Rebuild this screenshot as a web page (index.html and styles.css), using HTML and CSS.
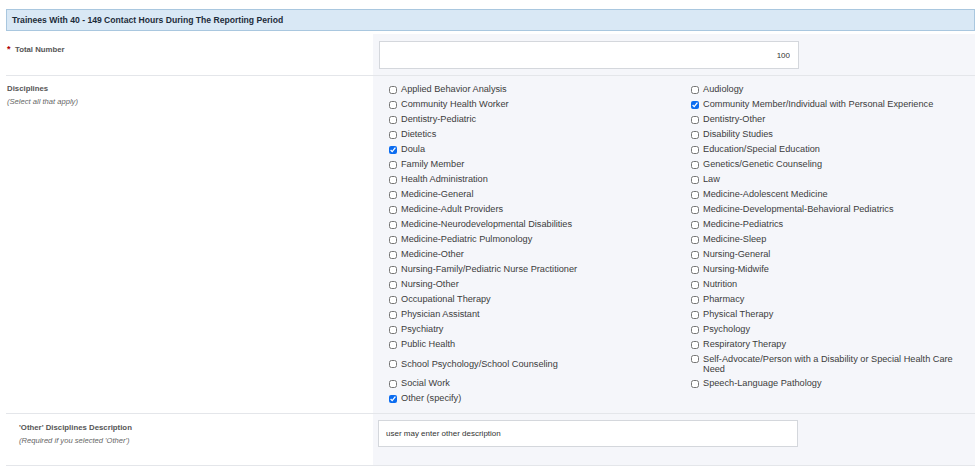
FILE: index.html
```html
<!DOCTYPE html>
<html>
<head>
<meta charset="utf-8">
<link rel="stylesheet" href="styles.css">
</head>
<body>
<div class="page">
  <div class="section-head">Trainees With 40 - 149 Contact Hours During The Reporting Period</div>

  <div class="row row-total">
    <div class="label-cell"><span class="req">*</span> <span class="lbl">Total Number</span></div>
    <div class="field-cell">
      <input class="text-input num" type="text" value="100">
    </div>
  </div>

  <div class="row row-disc">
    <div class="label-cell">
      <div class="lbl">Disciplines</div>
      <div class="hint">(Select all that apply)</div>
    </div>
    <div class="field-cell">
      <div class="checks">
        <label class="opt"><input type="checkbox"><span>Applied Behavior Analysis</span></label>
        <label class="opt"><input type="checkbox"><span>Audiology</span></label>
        <label class="opt"><input type="checkbox"><span>Community Health Worker</span></label>
        <label class="opt"><input type="checkbox" checked><span>Community Member/Individual with Personal Experience</span></label>
        <label class="opt"><input type="checkbox"><span>Dentistry-Pediatric</span></label>
        <label class="opt"><input type="checkbox"><span>Dentistry-Other</span></label>
        <label class="opt"><input type="checkbox"><span>Dietetics</span></label>
        <label class="opt"><input type="checkbox"><span>Disability Studies</span></label>
        <label class="opt"><input type="checkbox" checked><span>Doula</span></label>
        <label class="opt"><input type="checkbox"><span>Education/Special Education</span></label>
        <label class="opt"><input type="checkbox"><span>Family Member</span></label>
        <label class="opt"><input type="checkbox"><span>Genetics/Genetic Counseling</span></label>
        <label class="opt"><input type="checkbox"><span>Health Administration</span></label>
        <label class="opt"><input type="checkbox"><span>Law</span></label>
        <label class="opt"><input type="checkbox"><span>Medicine-General</span></label>
        <label class="opt"><input type="checkbox"><span>Medicine-Adolescent Medicine</span></label>
        <label class="opt"><input type="checkbox"><span>Medicine-Adult Providers</span></label>
        <label class="opt"><input type="checkbox"><span>Medicine-Developmental-Behavioral Pediatrics</span></label>
        <label class="opt"><input type="checkbox"><span>Medicine-Neurodevelopmental Disabilities</span></label>
        <label class="opt"><input type="checkbox"><span>Medicine-Pediatrics</span></label>
        <label class="opt"><input type="checkbox"><span>Medicine-Pediatric Pulmonology</span></label>
        <label class="opt"><input type="checkbox"><span>Medicine-Sleep</span></label>
        <label class="opt"><input type="checkbox"><span>Medicine-Other</span></label>
        <label class="opt"><input type="checkbox"><span>Nursing-General</span></label>
        <label class="opt"><input type="checkbox"><span>Nursing-Family/Pediatric Nurse Practitioner</span></label>
        <label class="opt"><input type="checkbox"><span>Nursing-Midwife</span></label>
        <label class="opt"><input type="checkbox"><span>Nursing-Other</span></label>
        <label class="opt"><input type="checkbox"><span>Nutrition</span></label>
        <label class="opt"><input type="checkbox"><span>Occupational Therapy</span></label>
        <label class="opt"><input type="checkbox"><span>Pharmacy</span></label>
        <label class="opt"><input type="checkbox"><span>Physician Assistant</span></label>
        <label class="opt"><input type="checkbox"><span>Physical Therapy</span></label>
        <label class="opt"><input type="checkbox"><span>Psychiatry</span></label>
        <label class="opt"><input type="checkbox"><span>Psychology</span></label>
        <label class="opt"><input type="checkbox"><span>Public Health</span></label>
        <label class="opt"><input type="checkbox"><span>Respiratory Therapy</span></label>
        <label class="opt"><input type="checkbox"><span>School Psychology/School Counseling</span></label>
        <label class="opt top"><input type="checkbox"><span>Self-Advocate/Person with a Disability or Special Health Care Need</span></label>
        <label class="opt"><input type="checkbox"><span>Social Work</span></label>
        <label class="opt"><input type="checkbox"><span>Speech-Language Pathology</span></label>
        <label class="opt"><input type="checkbox" checked><span>Other (specify)</span></label>
      </div>
    </div>
  </div>

  <div class="row row-other">
    <div class="label-cell indent">
      <div class="lbl">'Other' Disciplines Description</div>
      <div class="hint">(Required if you selected 'Other')</div>
    </div>
    <div class="field-cell">
      <input class="text-input" type="text" value="user may enter other description">
    </div>
  </div>
</div>
</body>
</html>
```
FILE: styles.css
```css
html, body {
  margin: 0;
  padding: 0;
  background: #ffffff;
}
body {
  font-family: "Liberation Sans", Arial, sans-serif;
  color: #333;
}
.page {
  padding: 9px 0 0 6px;
}
.section-head {
  height: 22px;
  line-height: 21px;
  box-sizing: border-box;
  background: #d9e8f5;
  border: 1px solid #a9c7df;
  padding-left: 5px;
  font-size: 8.6px;
  font-weight: bold;
  color: #1d2c3a;
  margin-bottom: 3px;
}
.row {
  display: flex;
  border-bottom: 1px solid #e4e6ea;
}
.label-cell {
  width: 367px;
  flex: none;
  box-sizing: border-box;
  padding: 8px 0 0 1px;
}
.label-cell.indent {
  padding-left: 13px;
}
.field-cell {
  flex: 1;
  background: #f5f6fa;
  box-sizing: border-box;
}
.lbl {
  font-size: 7.8px;
  font-weight: bold;
  color: #555;
}
.req {
  color: #b00000;
  font-size: 9px;
  font-weight: bold;
}
.hint {
  font-size: 7.6px;
  font-style: italic;
  color: #666;
  margin-top: 4px;
}
.row-total .field-cell {
  padding: 7px 0 6px 6px;
}
.row-total .label-cell {
  padding-top: 4px;
}
.text-input {
  display: block;
  width: 420px;
  height: 28px;
  box-sizing: border-box;
  border: 1px solid #d4d7dc;
  background: #fff;
  font-family: "Liberation Sans", Arial, sans-serif;
  font-size: 8px;
  color: #333;
  padding: 0 7px;
  margin: 0;
  outline: none;
}
.text-input.num {
  text-align: right;
  padding-right: 8px;
}
.row-disc .field-cell {
  padding: 8px 0 9px 16px;
}
.row-disc .label-cell {
  padding-top: 8px;
}
.checks {
  display: grid;
  grid-template-columns: 302px 280px;
  row-gap: 4px;
  align-items: center;
}
.opt {
  display: flex;
  align-items: center;
  font-size: 9.2px;
  line-height: 11px;
  color: #3c3c3c;
}
.opt.top {
  align-items: flex-start;
  line-height: 10px;
}
.opt.top input {
  margin-top: 1px;
}
.opt input {
  width: 8px;
  height: 8px;
  margin: 0 4px 0 0;
  flex: none;
}
.opt input:checked {
  accent-color: #0b6cf0;
}
.row-other .field-cell {
  padding: 6px 0 18px 5px;
}
.row-other .label-cell {
  padding-top: 9px;
}
.row-other .text-input {
  height: 27px;
}
```
